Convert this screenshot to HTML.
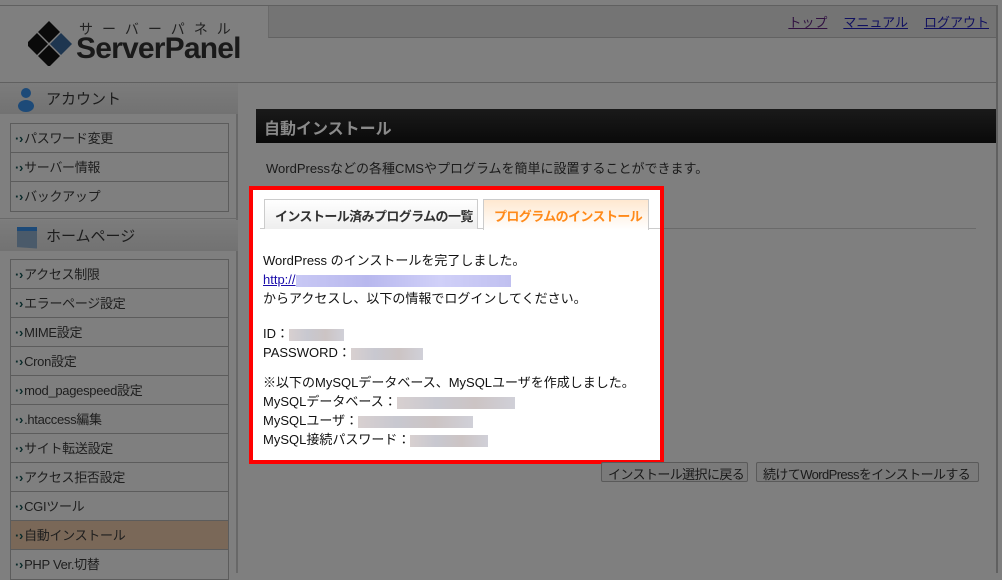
<!DOCTYPE html>
<html><head><meta charset="utf-8"><style>
*{margin:0;padding:0;box-sizing:border-box}
body{width:1002px;height:573px;overflow:hidden;background:#7f7f7f;font-family:"Liberation Sans","Noto Sans CJK JP",sans-serif;font-size:13px;color:#1a1a1a;position:relative;white-space:nowrap}
.abs{position:absolute}
.topline{left:0;top:5px;width:998px;height:1px;background:#606060}
.rborder{left:996px;top:5px;width:2px;height:568px;background:#606060}
.navband{left:268px;top:6px;width:728px;height:32px;background:#747474;border-bottom:1px solid #626262;border-left:1px solid #6a6a6a}
.hline{left:0;top:82px;width:997px;height:1px;background:#606060}
.nav a{color:#101060;text-decoration:underline;font-size:13px;margin-left:16px}
.side{left:0;top:83px;width:238px;height:490px;border-right:2px solid #686868}
.sh{position:absolute;left:0;width:238px;height:31px;background:linear-gradient(#7c7c7c,#727272);font-size:15px;color:#1c1c1c;padding:5px 0 0 46px}
.menu{position:absolute;left:10px;width:219px;border:1px solid #5c5c5c}
.menu div{height:29px;border-bottom:1px solid #5c5c5c;padding:4px 0 0 4px;font-size:13px;color:#1e1e1e;letter-spacing:-0.3px}
.menu div:last-child{border-bottom:none}
.menu div:before{content:"·›";color:#0a2a2a;font-weight:bold;margin-right:1px}
.title{left:256px;top:109px;width:740px;height:34px;background:linear-gradient(#1a1a1a,#0a0a0a);color:#8a8a8a;font-size:16px;font-weight:bold;padding:6px 0 0 8px}
.red{left:249px;top:186px;width:415px;height:278px;border:4px solid #ff0000;background:#fff}
.tab{position:absolute;top:9px;height:30px;border:1px solid #ccc;border-bottom:none;font-weight:bold;font-size:13px;padding:6px 0 0 10px;letter-spacing:-0.6px}
.btn{position:absolute;top:462px;height:20px;border:1px solid #5a5a5a;background:#7a7a7a;font-size:13px;padding:1px 0 0 6px;color:#1a1a1a;border-radius:2px;letter-spacing:-0.6px}
.blur{display:inline-block;height:12px;vertical-align:middle;background:linear-gradient(90deg,#d8d0d0,#c8c8d0,#ccc4c4,#d0d0d8)}
.ct div{height:19px}
</style></head><body>
<div class="abs topline"></div>
<div class="abs navband"><div class="nav" style="position:absolute;right:7px;top:6px"><a style="color:#301040">トップ</a><a>マニュアル</a><a>ログアウト</a></div></div>
<div class="abs hline"></div>
<div class="abs rborder"></div>
<svg class="abs" style="left:28px;top:20px" width="46" height="46" viewBox="0 0 46 46">
<polygon points="21,1 32,12 21,23 10,12" fill="#0a0a0a"/>
<polygon points="9,13 20,24 9,35 -2,24" fill="#0a0a0a"/>
<polygon points="33,13 44,24 33,35 22,24" fill="#1e3650"/>
<polygon points="21,25 32,36 21,47 10,36" fill="#0a0a0a"/>
</svg>
<div class="abs" style="left:79px;top:19px;font-size:14px;letter-spacing:9px;color:#222">サーバーパネル</div>
<div class="abs" style="left:76px;top:32px;font-size:30px;font-weight:bold;color:#1a1a1a;letter-spacing:-0.8px">ServerPanel</div>
<div class="abs side">
<div class="sh" style="top:0">アカウント</div>
<svg class="abs" style="left:17px;top:4px" width="18" height="25"><circle cx="9" cy="6" r="5" fill="#1d4a78"/><ellipse cx="9" cy="19" rx="8" ry="6" fill="#1d4a78"/></svg>
<div class="menu" style="top:40px"><div>パスワード変更</div><div>サーバー情報</div><div>バックアップ</div></div>
<div style="position:absolute;left:0;top:135px;width:238px;height:1px;background:#6a6a6a"></div>
<div class="sh" style="top:137px">ホームページ</div>
<svg class="abs" style="left:16px;top:142px" width="22" height="24"><rect x="1" y="2" width="20" height="20" fill="#4a5a6a" transform="skewY(4)"/><rect x="1" y="2" width="20" height="4" fill="#1d4a78"/></svg>
<div class="menu" style="top:176px"><div>アクセス制限</div><div>エラーページ設定</div><div>MIME設定</div><div>Cron設定</div><div>mod_pagespeed設定</div><div>.htaccess編集</div><div>サイト転送設定</div><div>アクセス拒否設定</div><div>CGIツール</div><div style="background:#7a6858">自動インストール</div><div>PHP Ver.切替</div></div>
</div>
<div class="abs title">自動インストール</div>
<div class="abs" style="left:266px;top:158px;font-size:13px">WordPressなどの各種CMSやプログラムを簡単に設置することができます。</div>
<div class="abs" style="left:660px;top:228px;width:316px;height:1px;background:#6a6a6a"></div>
<div class="abs red">
<div style="position:absolute;left:7px;top:38px;width:400px;height:1px;background:#ccc"></div>
<div class="tab" style="left:11px;width:214px;background:linear-gradient(#fff,#eee);color:#333">インストール済みプログラムの一覧</div>
<div class="tab" style="left:230px;width:166px;background:linear-gradient(#ffe8d0,#fff);color:#ff8a1a;height:31px">プログラムのインストール</div>
<div class="ct" style="position:absolute;left:10px;top:61px;line-height:19px;font-size:13px;color:#111">
<div>WordPress のインストールを完了しました。</div>
<div><span style="color:#1a0dab;text-decoration:underline">http://</span><span class="blur" style="width:215px;background:linear-gradient(90deg,#c8c8f4,#b8b8ee,#d0d0f8,#c0c0f0)"></span></div>
<div>からアクセスし、以下の情報でログインしてください。</div>
<div style="height:16px"></div>
<div>ID：<span class="blur" style="width:55px"></span></div>
<div>PASSWORD：<span class="blur" style="width:72px"></span></div>
<div style="height:11px"></div>
<div>※以下のMySQLデータベース、MySQLユーザを作成しました。</div>
<div>MySQLデータベース：<span class="blur" style="width:118px"></span></div>
<div>MySQLユーザ：<span class="blur" style="width:115px"></span></div>
<div>MySQL接続パスワード：<span class="blur" style="width:78px"></span></div>
</div>
</div>
<div class="btn" style="left:601px;width:147px">インストール選択に戻る</div>
<div class="btn" style="left:756px;width:223px">続けてWordPressをインストールする</div>
</body></html>
